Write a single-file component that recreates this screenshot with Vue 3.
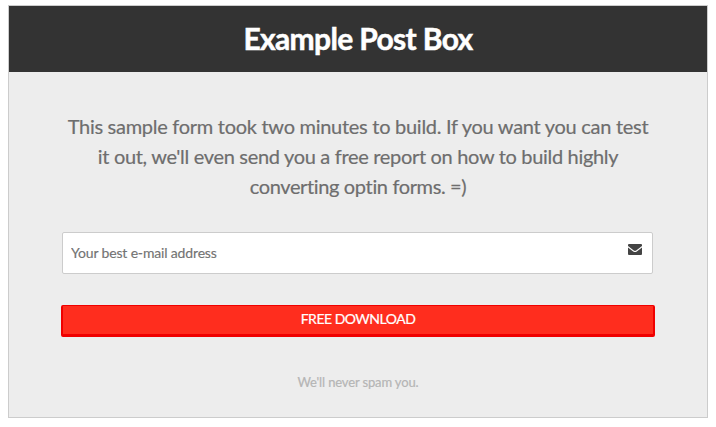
<script setup>
import { ref } from 'vue'

const email = ref('')
const lines = [
  'This sample form took two minutes to build. If you want you can test',
  "it out, we'll even send you a free report on how to build highly",
  'converting optin forms. =)',
]
</script>

<template>
  <section class="box">
    <header class="head"><h1>Example Post Box</h1></header>
    <form class="body" @submit.prevent>
      <p class="intro">
        <span v-for="(line, i) in lines" :key="i" class="line" :class="'line-' + i">{{ line }}</span>
      </p>
      <div class="field">
        <input v-model="email" type="text" placeholder="Your best e-mail address" />
        <svg class="mail" viewBox="0 0 14 11" width="14" height="11">
          <path d="M1 0H13Q14 0 14 1V2.1L8.2 6.5Q7 7.4 5.8 6.5L0 2.1V1Q0 0 1 0Z" />
          <path d="M0 3.5L5.2 7.4Q7 8.7 8.8 7.4L14 3.5V10Q14 11 13 11H1Q0 11 0 10Z" />
        </svg>
      </div>
      <button class="submit" type="submit">FREE DOWNLOAD</button>
      <p class="note">We'll never spam you.</p>
    </form>
  </section>
</template>

<style>
body {
  background: #fff;
}
</style>

<style scoped>
.box {
  box-sizing: border-box;
  width: 700px;
  height: 413px;
  margin: 5px 0 0 8px;
  border: 1px solid #ccc;
  background: #ededed;
  font-family: Lato, "Open Sans", sans-serif;
}
.head {
  box-sizing: border-box;
  height: 66px;
  padding-bottom: 2px;
  background: #333;
  color: #fff;
  display: flex;
  align-items: center;
  justify-content: center;
}
h1 {
  margin: 0;
  font-size: 30px;
  line-height: 36px;
  font-weight: 700;
  letter-spacing: -0.65px;
  white-space: nowrap;
  -webkit-text-stroke: 0.5px #fff;
}
.body {
  display: flex;
  flex-direction: column;
  padding: 39px 52px 0;
}
.intro {
  margin: 0;
  color: #6e6e6e;
  font-size: 20px;
  line-height: 30px;
  -webkit-text-stroke: 0.2px #6e6e6e;
}
.line {
  display: flex;
  justify-content: center;
  white-space: nowrap;
}
.line-0 {
  letter-spacing: -0.28px;
}
.line-1 {
  letter-spacing: -0.32px;
}
.line-2 {
  letter-spacing: -0.36px;
}
.field {
  box-sizing: border-box;
  display: flex;
  width: 591px;
  height: 42px;
  margin: 31px 0 0 1px;
  padding: 0 10px 0 8px;
  border: 1px solid #ccc;
  border-radius: 2px;
  background: #fff;
}
input {
  flex: 1;
  min-width: 0;
  padding: 0 0 2px;
  border: 0;
  outline: 0;
  background: none;
  font-family: inherit;
  font-size: 14px;
  letter-spacing: -0.16px;
  color: #6e6e6e;
}
input::placeholder {
  color: #737373;
  opacity: 1;
  -webkit-text-stroke: 0.15px #737373;
}
.mail {
  margin-top: 11px;
  fill: #444;
}
.submit {
  box-sizing: border-box;
  width: 594px;
  height: 32px;
  margin: 31px 0 0;
  padding: 0 0 2px;
  border: solid #f00000;
  border-width: 1px 2px 3px;
  border-radius: 2px;
  background: #ff2d1e;
  color: #fff;
  font-family: inherit;
  font-size: 14px;
  line-height: 26px;
  letter-spacing: -0.5px;
  -webkit-text-stroke: 0.2px #fff;
}
.note {
  margin: 35px 0 0;
  color: #b5b5b5;
  font-size: 13px;
  line-height: 20px;
  letter-spacing: -0.14px;
  text-align: center;
  -webkit-text-stroke: 0.2px #b5b5b5;
}
</style>
